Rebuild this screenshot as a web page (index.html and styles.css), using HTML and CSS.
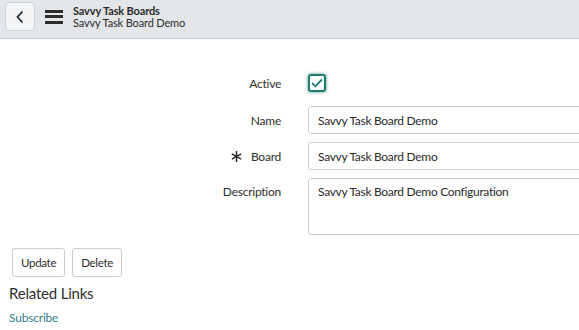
FILE: index.html
```html
<!DOCTYPE html>
<html lang="en">
<head>
  <meta charset="UTF-8" />
  <title>Savvy Task Board Demo</title>
  <link rel="stylesheet" href="styles.css">
</head>
<body>

  <!-- Header -->
  <div class="header">
    <button class="back-btn">
      <svg width="10" height="14" viewBox="0 0 10 14"><path d="M7.5 1.5 L2.5 7 L7.5 12.5" fill="none" stroke="#1f2a36" stroke-width="1.8"/></svg>
    </button>
    <div class="menu-icon">
      <span></span><span></span><span></span>
    </div>
    <div class="titles">
      <div class="title-main">Savvy Task Boards</div>
      <div class="title-sub">Savvy Task Board Demo</div>
    </div>
  </div>

  <!-- Form -->
  <div class="form">
    <label class="form-label active-label">Active</label>
    <div class="field check-field">
      <span class="checkbox">
        <svg width="12" height="10" viewBox="0 0 12 10"><path d="M1 5 L4.3 8.3 L11 1.5" fill="none" stroke="#1f7a70" stroke-width="1.8"/></svg>
      </span>
    </div>

    <label class="form-label">Name</label>
    <div class="field"><input class="text-input" type="text" value="Savvy Task Board Demo"></div>

    <label class="form-label">
      <svg class="required" width="11" height="11" viewBox="0 0 11 11">
        <path d="M5.5 0 V11 M0.8 2.8 L10.2 8.2 M0.8 8.2 L10.2 2.8" stroke="#2b2b2b" stroke-width="1.5"/>
      </svg>
      Board
    </label>
    <div class="field"><input class="text-input" type="text" value="Savvy Task Board Demo"></div>

    <label class="form-label desc-label">Description</label>
    <div class="field"><textarea class="text-area">Savvy Task Board Demo Configuration</textarea></div>
  </div>

  <div class="actions">
    <button class="form-btn">Update</button>
    <button class="form-btn">Delete</button>
  </div>

  <div class="related">
    <h3>Related Links</h3>
    <a href="#">Subscribe</a>
  </div>

</body>
</html>
```

FILE: styles.css
```css
body {
  font-family: Lato, "Noto Sans", sans-serif;
  margin: 0;
  background: #fff;
  color: #2e2e2e;
  overflow: hidden;
}
.header {
  display: flex;
  align-items: center;
  height: 38px;
  background: #e4e7ea;
  border-bottom: 1px solid #c8ccd0;
  padding-left: 5px;
}
.back-btn {
  width: 30px;
  height: 29px;
  margin-top: -5px;
  background: #f4f5f6;
  border: 1px solid #cdd1d4;
  border-radius: 4px;
  display: flex;
  align-items: center;
  justify-content: center;
  padding: 0;
}
.menu-icon {
  display: flex;
  flex-direction: column;
  gap: 2.5px;
  margin-left: 10px;
  margin-top: -5px;
  width: 18px;
}
.menu-icon span {
  display: block;
  height: 3px;
  background: #2b2b2b;
}
.titles {
  margin-left: 10px;
  margin-top: -4px;
  font-size: 11px;
  letter-spacing: -0.15px;
  line-height: 12px;
  color: #2b2b2b;
}
.title-main {
  font-weight: bold;
}
.form {
  display: grid;
  grid-template-columns: 281px 320px;
  column-gap: 27px;
  row-gap: 8px;
  margin-top: 35px;
}
.form-label {
  display: flex;
  align-items: center;
  justify-content: flex-end;
  font-size: 12px;
  letter-spacing: -0.25px;
  color: #2e2e2e;
  gap: 9px;
}
.active-label {
  padding-bottom: 6px;
}
.desc-label {
  align-items: flex-start;
  padding-top: 6px;
}
.required {
  margin-top: 1px;
}
.field {
  display: flex;
  align-items: center;
}
.check-field {
  align-items: flex-start;
  height: 24px;
}
.checkbox {
  width: 18px;
  height: 18px;
  box-sizing: border-box;
  border: 2px solid #1f7a70;
  border-radius: 3px;
  box-shadow: 0 0 3px 1px rgba(31, 122, 112, 0.45);
  display: flex;
  align-items: center;
  justify-content: center;
}
.text-input, .text-area {
  width: 100%;
  box-sizing: border-box;
  border: 1px solid #cbcbcb;
  border-radius: 3px;
  font-family: inherit;
  font-size: 12px;
  letter-spacing: -0.3px;
  color: #2a2a2a;
  padding: 0 9px;
}
.text-input {
  height: 28px;
}
.text-area {
  height: 57px;
  padding-top: 5px;
  resize: none;
}
.actions {
  display: flex;
  gap: 7px;
  margin: 13px 0 0 12px;
}
.form-btn {
  height: 29px;
  padding: 0 8px;
  background: #fff;
  border: 1px solid #cbcbcb;
  border-radius: 3px;
  font-family: inherit;
  font-size: 11.5px;
  letter-spacing: -0.3px;
  color: #2e2e2e;
}
.related {
  padding-left: 9px;
}
.related h3 {
  font-size: 15px;
  letter-spacing: -0.2px;
  font-weight: normal;
  margin: 7px 0 4px;
}
.related a {
  font-size: 12px;
  letter-spacing: -0.2px;
  color: #34808b;
  text-decoration: none;
}
```
